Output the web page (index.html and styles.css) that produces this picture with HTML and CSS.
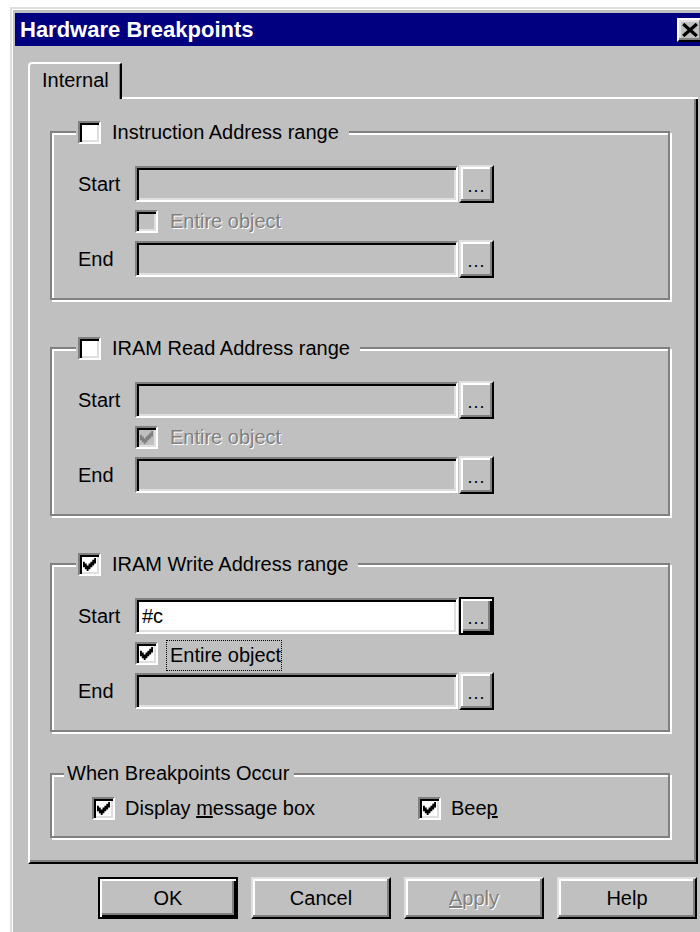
FILE: index.html
```html
<!DOCTYPE html>
<html lang="en">
<head>
<meta charset="utf-8">
<title>Hardware Breakpoints</title>
<link rel="stylesheet" href="styles.css">
</head>
<body>
<div class="window">
  <div class="titlebar">
    <span class="title">Hardware Breakpoints</span>
    <span class="close-btn" aria-label="Close">
      <svg viewBox="0 0 8 7" width="16" height="14"><path d="M0.6 0.5 L7.4 6.5 M7.4 0.5 L0.6 6.5" stroke="currentColor" stroke-width="1.6" fill="none"/></svg>
    </span>
  </div>

  <div class="dialog-body">
    <div class="tabstrip">
      <div class="tab">Internal</div>
      <div class="tab-fill"></div>
    </div>

    <div class="tab-panel">
      <fieldset class="group">
        <legend class="group-title"><span class="check"></span><span class="check-text">Instruction Address range</span></legend>
        <div class="group-body">
          <div class="field-row"><span class="field-label">Start</span><span class="textbox"></span><span class="btn browse">...</span></div>
          <div class="check-row"><span class="check is-disabled"></span><span class="check-text is-disabled-text">Entire object</span></div>
          <div class="field-row"><span class="field-label">End</span><span class="textbox"></span><span class="btn browse">...</span></div>
        </div>
      </fieldset>

      <fieldset class="group">
        <legend class="group-title"><span class="check"></span><span class="check-text">IRAM Read Address range</span></legend>
        <div class="group-body">
          <div class="field-row"><span class="field-label">Start</span><span class="textbox"></span><span class="btn browse">...</span></div>
          <div class="check-row"><span class="check is-disabled"><svg class="tick" viewBox="0 0 7 7" width="13" height="13"><path d="M0 2H1V3H2V4H3V3H4V2H5V1H6V0H7V3H6V4H5V5H4V6H3V7H2V6H1V5H0Z"/></svg></span><span class="check-text is-disabled-text">Entire object</span></div>
          <div class="field-row"><span class="field-label">End</span><span class="textbox"></span><span class="btn browse">...</span></div>
        </div>
      </fieldset>

      <fieldset class="group">
        <legend class="group-title"><span class="check"><svg class="tick" viewBox="0 0 7 7" width="13" height="13"><path d="M0 2H1V3H2V4H3V3H4V2H5V1H6V0H7V3H6V4H5V5H4V6H3V7H2V6H1V5H0Z"/></svg></span><span class="check-text">IRAM Write Address range</span></legend>
        <div class="group-body">
          <div class="field-row"><span class="field-label">Start</span><span class="textbox is-enabled">#c</span><span class="btn browse is-default">...</span></div>
          <div class="check-row"><span class="check"><svg class="tick" viewBox="0 0 7 7" width="13" height="13"><path d="M0 2H1V3H2V4H3V3H4V2H5V1H6V0H7V3H6V4H5V5H4V6H3V7H2V6H1V5H0Z"/></svg></span><span class="check-text has-focus">Entire object</span></div>
          <div class="field-row"><span class="field-label">End</span><span class="textbox"></span><span class="btn browse">...</span></div>
        </div>
      </fieldset>

      <fieldset class="group group-options">
        <legend class="group-caption">When Breakpoints Occur</legend>
        <div class="options-row">
          <div class="option option-wide"><span class="check"><svg class="tick" viewBox="0 0 7 7" width="13" height="13"><path d="M0 2H1V3H2V4H3V3H4V2H5V1H6V0H7V3H6V4H5V5H4V6H3V7H2V6H1V5H0Z"/></svg></span><span class="option-text">Display <u>m</u>essage box</span></div>
          <div class="option"><span class="check"><svg class="tick" viewBox="0 0 7 7" width="13" height="13"><path d="M0 2H1V3H2V4H3V3H4V2H5V1H6V0H7V3H6V4H5V5H4V6H3V7H2V6H1V5H0Z"/></svg></span><span class="option-text">Bee<u>p</u></span></div>
        </div>
      </fieldset>
    </div>

    <div class="button-row">
      <span class="btn push is-default">OK</span>
      <span class="btn push">Cancel</span>
      <span class="btn push is-disabled-text"><u>A</u>pply</span>
      <span class="btn push">Help</span>
    </div>
  </div>
</div>
</body>
</html>
```

FILE: styles.css
```css
* {
  box-sizing: border-box;
}

html,
body {
  margin: 0;
  height: 100%;
  overflow: hidden;
}

body {
  background: #ffffff;
  color: #000000;
  font-family: "Liberation Sans", Arial, sans-serif;
  font-size: 20px;
  line-height: 23px;
}

/* ---------- window frame ---------- */
.window {
  margin: 7px 0 0 10px;
  width: 700px;
  height: 940px;
  background: #c0c0c0;
  border-top: 2px solid #dfdfdf;
  border-left: 2px solid #dfdfdf;
  box-shadow: inset 1px 1px 0 #ffffff;
  padding: 4px 5px 0 3px;
}

.titlebar {
  height: 33px;
  background: #000080;
  display: flex;
  align-items: center;
  padding: 0 2px 0 5px;
}

.title {
  flex: 1;
  color: #ffffff;
  font-weight: bold;
  font-size: 22px;
}

.close-btn {
  width: 26px;
  height: 24px;
  flex: none;
  display: flex;
  align-items: center;
  justify-content: center;
  background: #c0c0c0;
  color: #000000;
  border: 2px solid;
  border-color: #ffffff #000000 #000000 #ffffff;
  box-shadow: inset -2px -2px 0 #808080, inset 2px 2px 0 #dfdfdf;
}

/* ---------- property sheet ---------- */
.dialog-body {
  padding: 16px 7px 0 13px;
}

.tabstrip {
  display: flex;
  align-items: flex-end;
}

.tab {
  height: 37px;
  padding: 5px 11px 0 12px;
  border-left: 2px solid #ffffff;
  border-top: 2px solid #ffffff;
  border-right: 2px solid #000000;
  border-radius: 4px 3px 0 0;
  box-shadow: inset -1px 0 0 #808080;
}

.tab-fill {
  flex: 1;
  border-bottom: 2px solid #ffffff;
}

.tab-panel {
  border-left: 2px solid #ffffff;
  border-right: 2px solid #000000;
  border-bottom: 2px solid #000000;
  box-shadow: inset -2px -2px 0 #808080;
  padding: 21px 26px 24px 20px;
}

/* etched group boxes */
.group {
  margin: 0;
  padding: 0 0 20px 0;
  min-width: 0;
  border: 2px solid #808080;
  box-shadow: inset 2px 2px 0 #ffffff, 2px 2px 0 #ffffff;
}

.group + .group {
  margin-top: 36px;
}

.group.group-options {
  margin-top: 30px;
  padding-bottom: 16px;
}

.group-title {
  display: flex;
  align-items: center;
  height: 24px;
  margin-left: 24px;
  padding: 0 10px 0 2px;
  background: #c0c0c0;
}

.group-title .check-text {
  margin-left: 11px;
}

.group-caption {
  margin-left: 12px;
  padding: 0 5px 0 3px;
  background: #c0c0c0;
}

.group-body {
  padding: 21px 0 0 26px;
}

.field-row {
  display: flex;
  align-items: center;
  height: 38px;
}

.field-label {
  width: 57px;
  flex: none;
}

.check-row {
  display: flex;
  align-items: center;
  height: 24px;
  margin: 6px 0 7px 57px;
}

.check-row .check-text {
  margin-left: 12px;
}

.check-text.has-focus {
  margin-left: 8px;
  margin-top: 5px;
  padding: 3px 0 3px 3px;
  border: 1px dotted #000000;
}

/* sunken edit field */
.textbox {
  width: 323px;
  height: 36px;
  flex: none;
  padding: 5px 0 0 5px;
  background: #c0c0c0;
  border: 2px solid;
  border-color: #808080 #ffffff #ffffff #808080;
  box-shadow: inset 2px 2px 0 #000000, inset -2px -2px 0 #dfdfdf;
}

.textbox.is-enabled {
  background: #ffffff;
}

/* sunken check box */
.check {
  width: 23px;
  height: 23px;
  flex: none;
  display: flex;
  align-items: center;
  justify-content: center;
  background: #ffffff;
  color: #000000;
  border: 2px solid;
  border-color: #808080 #ffffff #ffffff #808080;
  box-shadow: inset 2px 2px 0 #000000, inset -2px -2px 0 #dfdfdf;
}

.check.is-disabled {
  background: #c0c0c0;
  color: #808080;
}

.tick {
  display: block;
  fill: currentColor;
}

.is-disabled-text {
  color: #808080;
  text-shadow: 1px 1px 0 #ffffff;
}

/* raised push buttons */
.btn {
  display: flex;
  align-items: center;
  justify-content: center;
  flex: none;
  background: #c0c0c0;
  border: 2px solid;
  border-color: #dfdfdf #000000 #000000 #dfdfdf;
  box-shadow: inset -2px -2px 0 #808080, inset 2px 2px 0 #ffffff;
}

.btn.is-default {
  border-color: #000000;
  box-shadow: inset 2px 2px 0 #ffffff, inset -2px -2px 0 #000000, inset -4px -4px 0 #808080;
}

.browse {
  width: 35px;
  height: 38px;
  margin-left: 1px;
  padding-top: 4px;
  font-size: 18px;
  letter-spacing: 1px;
}

/* options group */
.options-row {
  display: flex;
  align-items: center;
  height: 24px;
  margin: 11px 0 0 40px;
}

.option {
  display: flex;
  align-items: center;
}

.option-wide {
  width: 326px;
}

.option-text {
  margin-left: 10px;
}

/* dialog buttons */
.button-row {
  display: flex;
  justify-content: flex-end;
  gap: 13px;
  margin-top: 13px;
  padding-right: 1px;
}

.push {
  width: 140px;
  height: 42px;
}
```
